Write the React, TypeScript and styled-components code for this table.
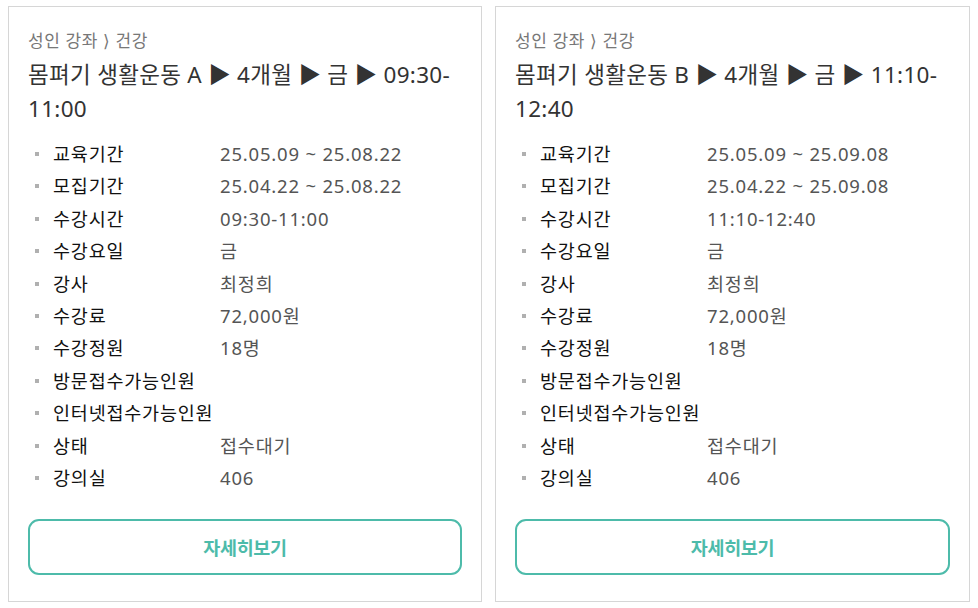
import styled, { createGlobalStyle } from 'styled-components'

const GlobalStyle = createGlobalStyle`
  body {
    margin: 0;
    background: #fff;
    font-family: 'Noto Sans', 'Noto Sans CJK KR', sans-serif;
  }
`

type Course = {
  name: string
  time: string
  period: string
  recruit: string
}

const courses: Course[] = [
  {
    name: '몸펴기 생활운동 A',
    time: '09:30-11:00',
    period: '25.05.09 ~ 25.08.22',
    recruit: '25.04.22 ~ 25.08.22',
  },
  {
    name: '몸펴기 생활운동 B',
    time: '11:10-12:40',
    period: '25.05.09 ~ 25.09.08',
    recruit: '25.04.22 ~ 25.09.08',
  },
]

const Page = styled.div`
  display: grid;
  grid-template-columns: 474px 475px;
  gap: 13px;
  padding: 6px 0 0 8px;
`

const Card = styled.div`
  border: 1px solid #d6d6d6;
  padding: 22px 19px 26px;
  display: flex;
  flex-direction: column;
`

const Crumb = styled.div`
  font-size: 17px;
  line-height: 24px;
  color: #777;
  letter-spacing: 0.6px;
`

const Title = styled.h2`
  margin: 5px 0 0;
  font-size: 22.5px;
  line-height: 34px;
  font-weight: 400;
  color: #333;
  letter-spacing: 0.3px;
`

const InfoList = styled.ul`
  list-style: none;
  margin: 12px 0 0;
  padding: 0;
`

const Row = styled.li`
  display: grid;
  grid-template-columns: 192px 1fr;
  font-size: 18.5px;
  line-height: 32.4px;
`

const Label = styled.span`
  position: relative;
  padding-left: 25px;
  color: #111;
  white-space: nowrap;
  letter-spacing: 0.8px;

  &::before {
    content: '';
    position: absolute;
    left: 7px;
    top: 14px;
    width: 4px;
    height: 4px;
    background: #b0b0b0;
  }
`

const Value = styled.span`
  color: #555;
  letter-spacing: 0.8px;
`

const DetailButton = styled.button`
  margin-top: 25px;
  height: 56px;
  border: 2px solid #4dbbaa;
  border-radius: 11px;
  background: #fff;
  color: #4dbbaa;
  font-family: inherit;
  font-size: 18.5px;
  font-weight: 700;
  letter-spacing: -0.3px;
  cursor: pointer;
`

const CourseCard = ({ course }: { course: Course }) => {
  const rows: [string, string][] = [
    ['교육기간', course.period],
    ['모집기간', course.recruit],
    ['수강시간', course.time],
    ['수강요일', '금'],
    ['강사', '최정희'],
    ['수강료', '72,000원'],
    ['수강정원', '18명'],
    ['방문접수가능인원', ''],
    ['인터넷접수가능인원', ''],
    ['상태', '접수대기'],
    ['강의실', '406'],
  ]
  return (
    <Card>
      <Crumb>성인 강좌 ⟩ 건강</Crumb>
      <Title>
        {course.name} ▶ 4개월 ▶ 금 ▶ {course.time}
      </Title>
      <InfoList>
        {rows.map(([label, value]) => (
          <Row key={label}>
            <Label>{label}</Label>
            <Value>{value}</Value>
          </Row>
        ))}
      </InfoList>
      <DetailButton>자세히보기</DetailButton>
    </Card>
  )
}

const App = () => {
  return (
    <>
      <GlobalStyle />
      <Page>
        {courses.map((c) => (
          <CourseCard key={c.name} course={c} />
        ))}
      </Page>
    </>
  )
}

export default App
